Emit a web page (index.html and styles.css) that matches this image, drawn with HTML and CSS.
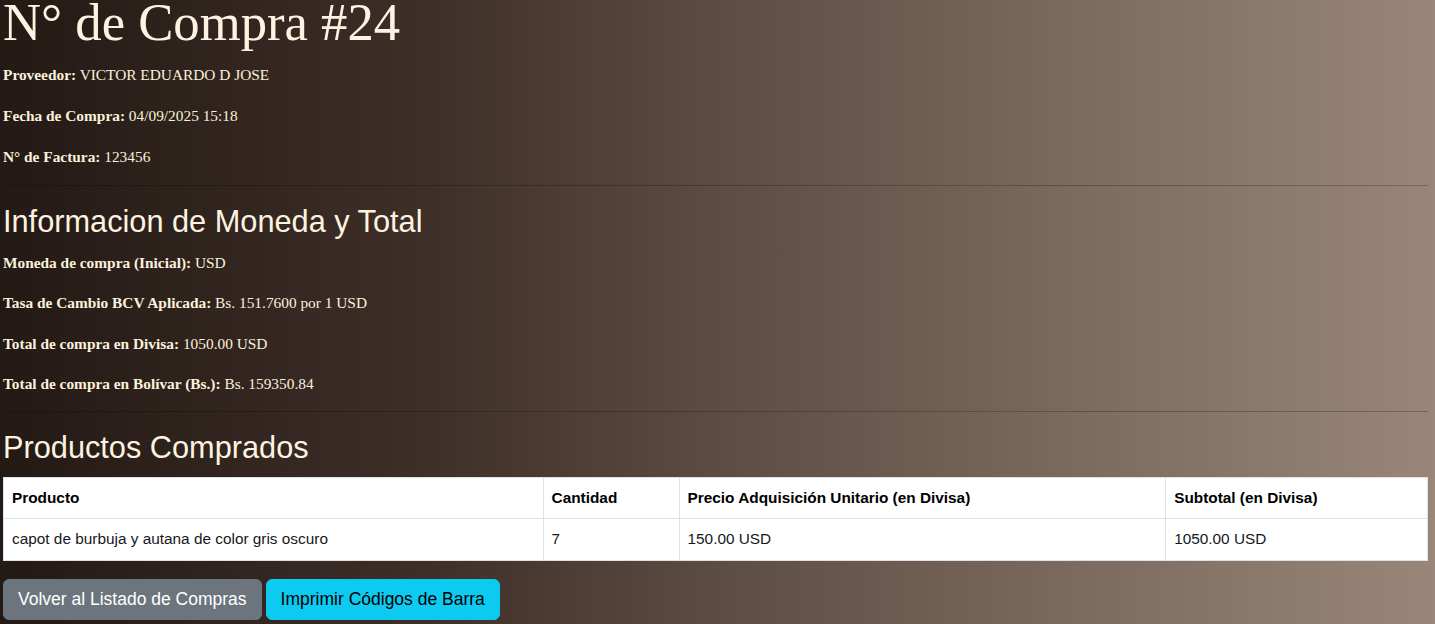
FILE: index.html
```html
<!DOCTYPE html>
<html lang="es">
<head>
<meta charset="utf-8">
<title>Compra #24</title>
<link rel="stylesheet" href="styles.css">
</head>
<body>
<main class="page">
  <h1 class="title">N° de Compra #24</h1>
  <section class="info info-first">
    <p><strong>Proveedor:</strong> VICTOR EDUARDO D JOSE</p>
    <p><strong>Fecha de Compra:</strong> 04/09/2025 15:18</p>
    <p><strong>N° de Factura:</strong> 123456</p>
  </section>
  <hr class="rule rule-first">
  <h2 class="section-title">Informacion de Moneda y Total</h2>
  <section class="info info-second">
    <p><strong>Moneda de compra (Inicial):</strong> USD</p>
    <p><strong>Tasa de Cambio BCV Aplicada:</strong> Bs. 151.7600 por 1 USD</p>
    <p><strong>Total de compra en Divisa:</strong> 1050.00 USD</p>
    <p><strong>Total de compra en Bolívar (Bs.):</strong> Bs. 159350.84</p>
  </section>
  <hr class="rule rule-second">
  <h2 class="section-title products-title">Productos Comprados</h2>
  <table class="products">
    <thead>
      <tr>
        <th class="col-product">Producto</th>
        <th class="col-qty">Cantidad</th>
        <th class="col-price">Precio Adquisición Unitario (en Divisa)</th>
        <th class="col-subtotal">Subtotal (en Divisa)</th>
      </tr>
    </thead>
    <tbody>
      <tr>
        <td>capot de burbuja y autana de color gris oscuro</td>
        <td>7</td>
        <td>150.00 USD</td>
        <td>1050.00 USD</td>
      </tr>
    </tbody>
  </table>
  <div class="actions">
    <a class="btn btn-secondary" href="#">Volver al Listado de Compras</a>
    <a class="btn btn-info" href="#">Imprimir Códigos de Barra</a>
  </div>
</main>
</body>
</html>
```

FILE: styles.css
```css
html, body {
  margin: 0;
  padding: 0;
  height: 100%;
}

body {
  background: linear-gradient(90deg, #231915 0%, #3e2f28 30%, #5d4c42 50%, #7c6a5e 75%, #998679 100%);
  color: #fbf1dc;
  font-family: "Liberation Serif", "Times New Roman", serif;
  overflow: hidden;
}

.page {
  padding: 0 7px 0 3px;
}

.title {
  font-family: "Liberation Serif", "Times New Roman", serif;
  font-weight: normal;
  font-size: 52.7px;
  line-height: 44px;
  margin: 0;
  color: #fdf3e0;
}

.info {
  display: flex;
  flex-direction: column;
  gap: 19px;
}

.info p {
  margin: 0;
  font-size: 15.36px;
  line-height: 22px;
}

.info strong {
  font-weight: bold;
}

.info-first {
  margin: 19.8px 0 17.2px;
}

.info-second {
  margin: 11.2px 0 15.6px;
  gap: 18.6px;
}

.rule {
  margin: 0;
  border: 0;
  height: 1px;
  background: rgba(0, 0, 0, 0.22);
}

.section-title {
  font-family: "Liberation Sans", Arial, sans-serif;
  font-weight: normal;
  font-size: 30.72px;
  line-height: 36.9px;
  margin: 17.6px 0 0;
  color: #fdf3e0;
}

.products-title {
  margin: 18.4px 0 9.4px;
}

.products {
  width: 1425px;
  border-collapse: collapse;
  background: #ffffff;
  font-family: "Liberation Sans", Arial, sans-serif;
  font-size: 15.36px;
  color: #16191c;
}

.products th,
.products td {
  border: 1px solid #dee2e6;
  padding: 8px 8px;
  line-height: 24px;
  text-align: left;
  vertical-align: top;
}

.products th {
  font-weight: bold;
  color: #000;
}

.products td {
  padding-top: 8.5px;
  padding-bottom: 8.5px;
}

.col-product { width: 523px; }
.col-qty { width: 119px; }
.col-price { width: 470px; }
.col-subtotal { width: 245px; }

.actions {
  display: flex;
  gap: 4px;
  margin-top: 18.5px;
}

.btn {
  display: inline-block;
  font-family: "Liberation Sans", Arial, sans-serif;
  font-size: 17.5px;
  line-height: 27px;
  padding: 6px 14px;
  border: 1px solid transparent;
  border-radius: 6px;
  text-decoration: none;
}

.btn-secondary {
  background: #6c757d;
  border-color: #6c757d;
  color: #ffffff;
}

.btn-info {
  background: #0dcaf0;
  border-color: #0dcaf0;
  color: #000000;
}
```
